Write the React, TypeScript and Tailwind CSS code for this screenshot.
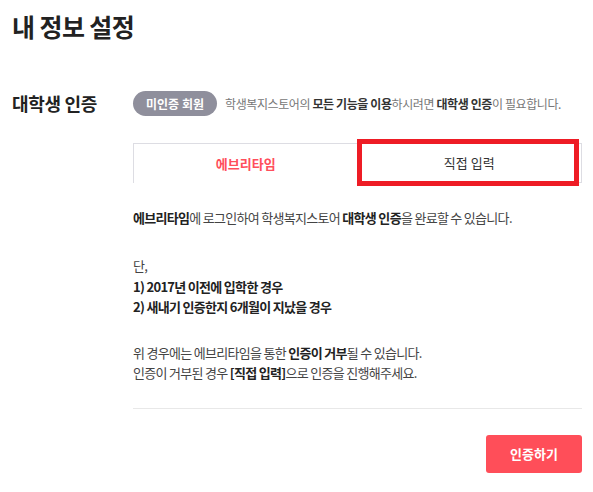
import React from "react";

const font = { fontFamily: '"Noto Sans CJK KR", "Noto Sans", sans-serif' };

export default function App() {
  return (
    <div className="w-[593px] h-[492px] bg-white text-[#222] relative" style={font}>
      <div className="pl-[12px] pr-[11px] pt-[9px]">
        <h1 className="text-[25px] font-bold leading-[34px] tracking-[-0.6px]">내 정보 설정</h1>
        <div className="flex mt-[48px]">
          <div className="w-[121px] shrink-0 text-[18px] font-bold leading-[26px] tracking-[-0.3px] mt-[-1px]">대학생 인증</div>
          <div className="flex-1">
            <div className="flex items-center h-[25px]">
              <span className="h-[25px] w-[84px] rounded-full bg-[#8f8f9c] text-white text-[12px] font-bold flex items-center justify-center">미인증 회원</span>
              <span className="ml-[8px] text-[12px] text-[#777] tracking-[-0.4px]">
                학생복지스토어의 <b className="text-[#333]">모든 기능을 이용</b>하시려면 <b className="text-[#333]">대학생 인증</b>이 필요합니다.
              </span>
            </div>
            <div className="flex mt-[27px] h-[40px] border-t border-[#dddde3]">
              <div className="flex-1 border-l border-[#dddde3] flex items-center justify-center text-[13px] font-bold text-[#ff4e5b]">에브리타임</div>
              <div className="flex-1 border-b border-r border-[#dddde3] flex items-center justify-center text-[13px] text-[#333]">직접 입력</div>
            </div>
            <div className="pt-[25px] text-[13px] leading-[20px] text-[#444] tracking-[-0.7px]">
              <p><b className="text-[#222]">에브리타임</b>에 로그인하여 학생복지스토어 <b className="text-[#222]">대학생 인증</b>을 완료할 수 있습니다.</p>
              <p className="mt-[28px]">단,</p>
              <p className="mt-[1px] font-bold text-[#222]">1) 2017년 이전에 입학한 경우</p>
              <p className="font-bold text-[#222]">2) 새내기 인증한지 6개월이 지났을 경우</p>
              <p className="mt-[26px]">위 경우에는 에브리타임을 통한 <b className="text-[#222]">인증이 거부</b>될 수 있습니다.</p>
              <p>인증이 거부된 경우 <b className="text-[#222]">[직접 입력]</b>으로 인증을 진행해주세요.</p>
            </div>
            <div className="mt-[25px] border-t border-[#e8e8e8]" />
            <div className="flex justify-end mt-[26px]">
              <button className="w-[96px] h-[38px] rounded-[3px] bg-[#ff4e59] text-white text-[13px] font-bold">인증하기</button>
            </div>
          </div>
        </div>
      </div>
      <div className="absolute left-[357px] top-[139px] w-[222px] h-[47px] border-[5px] border-[#ee1c25]" />
    </div>
  );
}
